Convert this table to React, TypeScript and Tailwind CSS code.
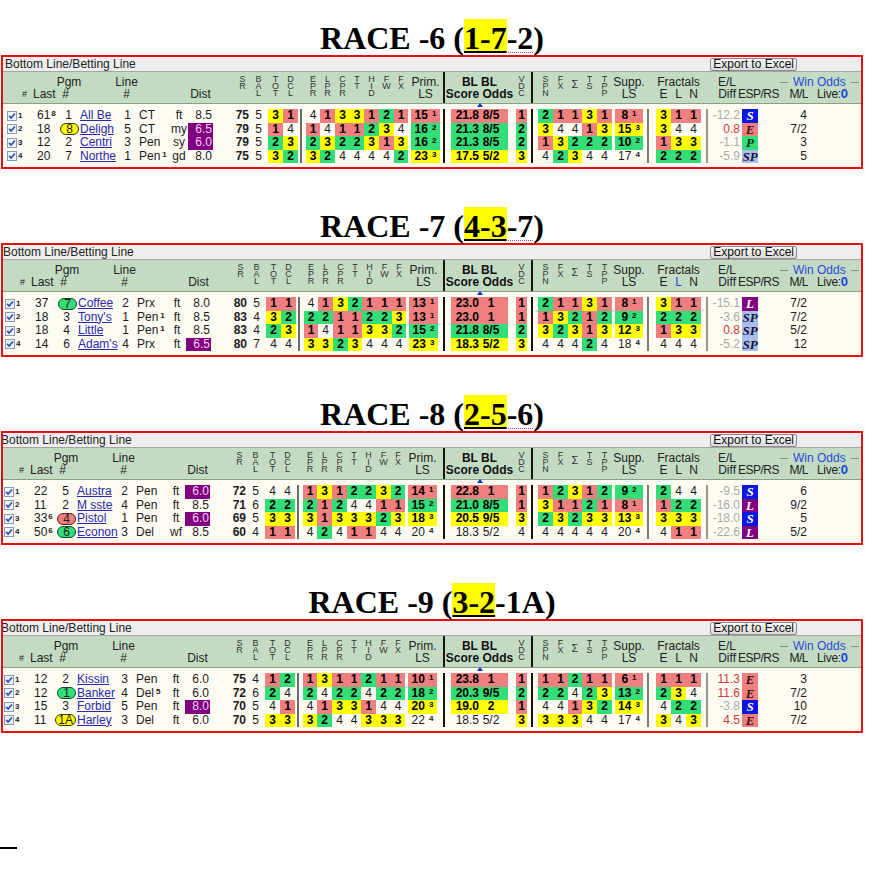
import React from "react";

type Horse = {
  last: string;
  lastSup?: string;
  pgm: string;
  oval?: "Y" | "G" | "R";
  name: string;
  line: string;
  track: string;
  trackSup?: string;
  surf: string;
  dist: string;
  purple?: boolean;
  sr: string;
  bal: string;
  td: string;
  fac: string;
  prim: [string, string, string];
  bl: [string, string, string];
  vdc: string;
  spn: string;
  supp: [string, string, string];
  fr: string;
  diff: string;
  badge: "S" | "E" | "P" | "SP" | "L";
  ml: string;
};

type Race = {
  n: number;
  hi: string;
  tail: string;
  dotted: boolean;
  s: 0 | 2 | 3;
  blueL?: boolean;
  horses: Horse[];
};

const RACES: Race[] = [
  {
    n: 6,
    hi: "1-7",
    tail: "-2",
    dotted: true,
    s: 0,
    horses: [
      { last: "61", lastSup: "8", pgm: "1", name: "All Be", line: "1", track: "CT", surf: "ft", dist: "8.5", sr: "75", bal: "5", td: "Y3 R1", fac: "W4 R1 Y3 Y3 R1 G2 R1", prim: ["R", "15", "1"], bl: ["R", "21.8", "8/5"], vdc: "R1", spn: "G2 R1 R1 Y3 R1", supp: ["R", "8", "1"], fr: "Y3 R1 R1", diff: "-12.2", badge: "S", ml: "4" },
      { last: "18", pgm: "8", oval: "Y", name: "Deligh", line: "5", track: "CT", surf: "my", dist: "6.5", purple: true, sr: "79", bal: "5", td: "R1 W4", fac: "R1 W4 R1 R1 G2 Y3 W4", prim: ["G", "16", "2"], bl: ["G", "21.3", "8/5"], vdc: "G2", spn: "Y3 W4 W4 R1 Y3", supp: ["Y", "15", "3"], fr: "Y3 W4 W4", diff: "0.8", badge: "E", ml: "7/2" },
      { last: "12", pgm: "2", name: "Centri", line: "3", track: "Pen", surf: "sy", dist: "6.0", purple: true, sr: "79", bal: "5", td: "G2 Y3", fac: "G2 Y3 G2 G2 Y3 R1 Y3", prim: ["G", "16", "2"], bl: ["G", "21.3", "8/5"], vdc: "G2", spn: "R1 Y3 G2 G2 G2", supp: ["G", "10", "2"], fr: "R1 Y3 Y3", diff: "-1.1", badge: "P", ml: "3" },
      { last: "20", pgm: "7", name: "Northe", line: "1", track: "Pen", trackSup: "1", surf: "gd", dist: "8.0", sr: "75", bal: "5", td: "Y3 G2", fac: "Y3 G2 W4 W4 W4 W4 G2", prim: ["Y", "23", "3"], bl: ["Y", "17.5", "5/2"], vdc: "Y3", spn: "W4 G2 Y3 W4 W4", supp: ["W", "17", "4"], fr: "G2 G2 G2", diff: "-5.9", badge: "SP", ml: "5" },
    ],
  },
  {
    n: 7,
    hi: "4-3",
    tail: "-7",
    dotted: true,
    s: 2,
    blueL: true,
    horses: [
      { last: "37", pgm: "7", oval: "G", name: "Coffee", line: "2", track: "Prx", surf: "ft", dist: "8.0", sr: "80", bal: "5", td: "R1 R1", fac: "W4 R1 Y3 G2 R1 R1 R1", prim: ["R", "13", "1"], bl: ["R", "23.0", "1"], vdc: "R1", spn: "G2 R1 R1 Y3 R1", supp: ["R", "8", "1"], fr: "Y3 R1 R1", diff: "-15.1", badge: "L", ml: "7/2" },
      { last: "18", pgm: "3", name: "Tony's", line: "1", track: "Pen", trackSup: "1", surf: "ft", dist: "8.5", sr: "83", bal: "4", td: "Y3 G2", fac: "G2 G2 R1 R1 G2 G2 Y3", prim: ["R", "13", "1"], bl: ["R", "23.0", "1"], vdc: "R1", spn: "R1 Y3 G2 R1 G2", supp: ["G", "9", "2"], fr: "G2 G2 G2", diff: "-3.6", badge: "SP", ml: "7/2" },
      { last: "18", pgm: "4", name: "Little", line: "1", track: "Pen", trackSup: "1", surf: "ft", dist: "8.5", sr: "83", bal: "4", td: "G2 Y3", fac: "R1 W4 R1 R1 Y3 Y3 G2", prim: ["G", "15", "2"], bl: ["G", "21.8", "8/5"], vdc: "G2", spn: "Y3 G2 Y3 R1 Y3", supp: ["Y", "12", "3"], fr: "R1 Y3 Y3", diff: "0.8", badge: "SP", ml: "5/2" },
      { last: "14", pgm: "6", name: "Adam's", line: "4", track: "Prx", surf: "ft", dist: "6.5", purple: true, sr: "80", bal: "7", td: "W4 W4", fac: "Y3 Y3 G2 Y3 W4 W4 W4", prim: ["Y", "23", "3"], bl: ["Y", "18.3", "5/2"], vdc: "Y3", spn: "W4 W4 W4 G2 W4", supp: ["W", "18", "4"], fr: "W4 W4 W4", diff: "-5.2", badge: "SP", ml: "12" },
    ],
  },
  {
    n: 8,
    hi: "2-5",
    tail: "-6",
    dotted: true,
    s: 3,
    horses: [
      { last: "22", pgm: "5", name: "Austra", line: "2", track: "Pen", surf: "ft", dist: "6.0", purple: true, sr: "72", bal: "5", td: "W4 W4", fac: "R1 Y3 R1 G2 G2 Y3 G2", prim: ["R", "14", "1"], bl: ["R", "22.8", "1"], vdc: "R1", spn: "R1 G2 Y3 R1 G2", supp: ["G", "9", "2"], fr: "G2 W4 W4", diff: "-9.5", badge: "S", ml: "6" },
      { last: "11", pgm: "2", name: "M sste", line: "4", track: "Pen", surf: "ft", dist: "8.5", sr: "71", bal: "6", td: "G2 G2", fac: "G2 R1 G2 W4 W4 R1 R1", prim: ["G", "15", "2"], bl: ["G", "21.0", "8/5"], vdc: "R1", spn: "Y3 R1 R1 G2 R1", supp: ["R", "8", "1"], fr: "R1 G2 G2", diff: "-16.0", badge: "L", ml: "9/2" },
      { last: "33", lastSup: "6", pgm: "4", oval: "R", name: "Pistol", line: "1", track: "Pen", surf: "ft", dist: "6.0", purple: true, sr: "69", bal: "5", td: "Y3 Y3", fac: "Y3 R1 Y3 Y3 Y3 G2 Y3", prim: ["Y", "18", "3"], bl: ["Y", "20.5", "9/5"], vdc: "Y3", spn: "G2 Y3 G2 Y3 Y3", supp: ["Y", "13", "3"], fr: "Y3 Y3 Y3", diff: "-18.0", badge: "S", ml: "5" },
      { last: "50", lastSup: "6", pgm: "6", oval: "G", name: "Econon", line: "3", track: "Del", surf: "wf", dist: "8.5", sr: "60", bal: "4", td: "R1 R1", fac: "W4 G2 W4 R1 R1 W4 W4", prim: ["W", "20", "4"], bl: ["W", "18.3", "5/2"], vdc: "W4", spn: "W4 W4 W4 W4 W4", supp: ["W", "20", "4"], fr: "W4 R1 R1", diff: "-22.6", badge: "L", ml: "5/2" },
    ],
  },
  {
    n: 9,
    hi: "3-2",
    tail: "-1A",
    dotted: false,
    s: 3,
    horses: [
      { last: "12", pgm: "2", name: "Kissin", line: "3", track: "Pen", surf: "ft", dist: "6.0", sr: "75", bal: "4", td: "R1 G2", fac: "R1 Y3 R1 R1 G2 R1 R1", prim: ["R", "10", "1"], bl: ["R", "23.8", "1"], vdc: "R1", spn: "R1 R1 G2 R1 R1", supp: ["R", "6", "1"], fr: "R1 R1 R1", diff: "11.3", badge: "E", ml: "3" },
      { last: "12", pgm: "1", oval: "G", name: "Banker", line: "4", track: "Del", trackSup: "5", surf: "ft", dist: "6.0", sr: "72", bal: "6", td: "G2 W4", fac: "G2 W4 G2 G2 W4 G2 G2", prim: ["G", "18", "2"], bl: ["G", "20.3", "9/5"], vdc: "G2", spn: "G2 G2 W4 G2 Y3", supp: ["G", "13", "2"], fr: "G2 Y3 W4", diff: "11.6", badge: "E", ml: "7/2" },
      { last: "15", pgm: "3", name: "Forbid", line: "5", track: "Pen", surf: "ft", dist: "8.0", purple: true, sr: "70", bal: "5", td: "W4 R1", fac: "W4 R1 Y3 Y3 R1 W4 W4", prim: ["Y", "20", "3"], bl: ["Y", "19.0", "2"], vdc: "R1", spn: "W4 W4 R1 Y3 G2", supp: ["Y", "14", "3"], fr: "W4 G2 G2", diff: "-3.8", badge: "S", ml: "10" },
      { last: "11", pgm: "1A", oval: "Y", name: "Harley", line: "3", track: "Del", surf: "ft", dist: "6.0", sr: "70", bal: "5", td: "Y3 Y3", fac: "Y3 G2 W4 W4 Y3 Y3 Y3", prim: ["W", "22", "4"], bl: ["W", "18.5", "5/2"], vdc: "Y3", spn: "Y3 Y3 Y3 W4 W4", supp: ["W", "17", "4"], fr: "Y3 W4 Y3", diff: "4.5", badge: "E", ml: "7/2" },
    ],
  },
];

const BG: Record<string, string> = {
  R: "bg-[#f08080]",
  G: "bg-[#33dd77]",
  Y: "bg-[#ffff00]",
  W: "",
};

const OVAL: Record<string, string> = {
  Y: "bg-[#ffff00] border-[#3a3a00]",
  G: "bg-[#33dd77] border-[#0e4a24]",
  R: "bg-[#f08080] border-[#5a1a1a]",
};

const BADGE: Record<string, string> = {
  S: "bg-[#0c16e4] text-white",
  E: "bg-[#f08080] text-[#3a1010]",
  P: "bg-[#33dd77] text-[#0a3018]",
  SP: "bg-[#a9bde8] text-[#14143c]",
  L: "bg-[#800080] text-white",
};

// shift of the left block (px) per race
const PAD: Record<number, string> = { 0: "w-[4px]", 2: "w-[2px]", 3: "w-[1px]" };
const SEPBL: Record<number, string> = { 0: "w-[11px]", 2: "w-[13px]", 3: "w-[14px]" };
const TITLE_ML: Record<number, string> = { 0: "ml-[2px]", 2: "ml-0", 3: "-ml-[2px]" };

const FAC_W = ["w-[14px]", "w-[15px]", "w-[15px]", "w-[14px]", "w-[15px]", "w-[15px]", "w-[14px]"];
const SPN_W = ["w-[15px]", "w-[15px]", "w-[14px]", "w-[15px]", "w-[15px]"];
const TD_W = ["w-[15px]", "w-[15px]"];
const FR_W = ["w-[15px]", "w-[15px]", "w-[15px]"];

function parse(s: string) {
  return s.split(" ").map((t) => ({ c: t[0], v: t.slice(1) }));
}

function Cell({ c, w, children }: { c: string; w: string; children: React.ReactNode }) {
  return (
    <div className={`${w} flex shrink-0 items-center justify-center whitespace-nowrap ${BG[c]} ${c === "W" ? "" : "font-bold text-black"}`}>
      {children}
    </div>
  );
}

function Group({ data, widths }: { data: string; widths: string[] }) {
  return (
    <>
      {parse(data).map((d, i) => (
        <Cell key={i} c={d.c} w={widths[i]}>
          {d.v}
        </Cell>
      ))}
    </>
  );
}

function Sup({ children, gap = "ml-[1px]" }: { children: React.ReactNode; gap?: string }) {
  return <span className={`relative top-[-3px] ${gap} text-[8px] font-bold leading-none`}>{children}</span>;
}

function LsCell({ v, w }: { v: [string, string, string]; w: string }) {
  const [c, n, sup] = v;
  return (
    <Cell c={c} w={w}>
      <span>
        {n}
        <Sup gap="ml-[4px]">{sup}</Sup>
      </span>
    </Cell>
  );
}

function Check() {
  return (
    <svg width="10" height="10" viewBox="0 0 10 10" className="shrink-0">
      <rect x="0.5" y="0.5" width="9" height="9" fill="#f3f4f8" stroke="#7f9db9" />
      <path d="M2.1 4.9 L4.1 7 L7.9 2.5" fill="none" stroke="#2a4fc0" strokeWidth="1.7" />
    </svg>
  );
}

function Line({ ml, color }: { ml: string; color: string }) {
  return <div className={`${ml} h-full w-[2px] ${color}`} />;
}

function HorseRow({ h, n, s }: { h: Horse; n: number; s: number }) {
  const neg = h.diff.startsWith("-");
  return (
    <div className="flex h-[13.5px] text-[12px] leading-[13.5px] text-[#1c1c1c]">
      <div className={`${PAD[s]} shrink-0`} />
      <div className="flex w-[16px] shrink-0 items-center">
        <Check />
        <span className="ml-[1px] text-[8px] font-bold leading-none">{n}</span>
      </div>
      <div className="w-[35px] shrink-0 whitespace-nowrap pl-[14px]">
        {h.last}
        {h.lastSup && <Sup>{h.lastSup}</Sup>}
      </div>
      <div className="flex w-[22px] shrink-0 items-center justify-end">
        {h.oval ? (
          <span className={`mr-[1px] flex h-[12px] items-center rounded-full border leading-none ${h.pgm.length > 1 ? "px-[2px]" : "px-[5px]"} ${OVAL[h.oval]}`}>
            {h.pgm}
          </span>
        ) : (
          <span className="pr-[8px]">{h.pgm}</span>
        )}
      </div>
      <div className="w-[36px] shrink-0 whitespace-nowrap text-[#2828b0] underline">{h.name}</div>
      <div className="w-[21px] shrink-0 pr-[6px] text-right">{h.line}</div>
      <div className="w-[33px] shrink-0 whitespace-nowrap pl-[2px]">
        {h.track}
        {h.trackSup && <Sup gap="ml-[2px]">{h.trackSup}</Sup>}
      </div>
      <div className="w-[18px] shrink-0 text-center">{h.surf}</div>
      <div className={`w-[25px] shrink-0 pr-[1px] text-right ${h.purple ? "bg-[#800080] text-[#f6d2f6]" : ""}`}>{h.dist}</div>
      <div className="w-[21px] shrink-0" />
      <div className="w-[17px] shrink-0 pr-[2px] text-right font-bold">{h.sr}</div>
      <div className="w-[15px] shrink-0 text-center">{h.bal}</div>
      <div className="w-[2px] shrink-0" />
      <Group data={h.td} widths={TD_W} />
      <div className="flex w-[8px] shrink-0">
        <Line ml="ml-[2px]" color="bg-[#6a6a6a]" />
      </div>
      <Group data={h.fac} widths={FAC_W} />
      <div className="w-[3px] shrink-0" />
      <LsCell v={h.prim} w="w-[29px]" />
      <div className={`${SEPBL[s]} flex shrink-0 justify-end`}>
        <div className="mr-[6px] h-full w-[2px] bg-[#151515]" />
      </div>
      <div className={`flex w-[57px] shrink-0 ${BG[h.bl[0]]} ${h.bl[0] === "W" ? "" : "font-bold text-black"}`}>
        <span className="w-[28px] text-right">{h.bl[1]}</span>
        <span className="w-[24px] text-center">{h.bl[2]}</span>
      </div>
      <div className="w-[8px] shrink-0" />
      <Group data={h.vdc} widths={["w-[11px]"]} />
      <div className="flex w-[11px] shrink-0">
        <Line ml="ml-[4px]" color="bg-[#151515]" />
      </div>
      <Group data={h.spn} widths={SPN_W} />
      <div className="w-[3px] shrink-0" />
      <LsCell v={h.supp} w="w-[28px]" />
      <div className="flex w-[13px] shrink-0">
        <Line ml="ml-[4px]" color="bg-[#7a7a7a]" />
      </div>
      <Group data={h.fr} widths={FR_W} />
      <div className="flex w-[11px] shrink-0">
        <Line ml="ml-[5px]" color="bg-[#959595]" />
      </div>
      <div className={`w-[29px] shrink-0 pr-[1px] text-right ${neg ? "text-[#aaaaaa]" : "text-[#d23a3a]"}`}>{h.diff}</div>
      <div className="w-[1px] shrink-0" />
      <div className={`flex w-[16px] shrink-0 items-center justify-center font-['Liberation_Serif',serif] text-[13px] font-bold italic ${BADGE[h.badge]}`}>
        {h.badge}
      </div>
      <div className="w-[50px] shrink-0 pr-[1px] text-right">{h.ml}</div>
      <div className="flex-1" />
    </div>
  );
}

function Stack({ t, w }: { t: string; w: string }) {
  return (
    <div className={`${w} flex shrink-0 flex-col items-center pt-[4px] text-[9px] leading-[7px] text-[#333]`}>
      {t.split("").map((ch, i) => (
        <span key={i}>{ch}</span>
      ))}
    </div>
  );
}

function TwoLine({ a, b, w, bold }: { a: string; b: string; w: string; bold?: boolean }) {
  return (
    <div className={`${w} flex shrink-0 flex-col items-center whitespace-nowrap pt-[4px] ${bold ? "font-bold text-[#111]" : ""}`}>
      <span>{a || "\u00a0"}</span>
      <span>{b}</span>
    </div>
  );
}

function HeaderRow({ s, blueL }: { s: number; blueL?: boolean }) {
  return (
    <div className="flex h-[32px] border-b border-[#8d9e8d] bg-[#c3dbc3] text-[12px] leading-[12px] text-[#222]">
      <div className={`${PAD[s]} shrink-0`} />
      <div className="w-[16px] shrink-0 pl-[15px] pt-[18px] text-[9px] leading-none">#</div>
      <div className="w-[35px] shrink-0 pl-[10px] pt-[16px]">Last</div>
      <div className="flex w-[22px] shrink-0 flex-col items-center whitespace-nowrap pt-[4px]">
        <span>Pgm</span>
        <span className="mr-[7px]">#</span>
      </div>
      <div className="w-[36px] shrink-0" />
      <TwoLine a="Line" b="#" w="w-[21px]" />
      <div className="w-[33px] shrink-0" />
      <div className="w-[18px] shrink-0" />
      <TwoLine a="" b="Dist" w="w-[25px]" />
      <div className="w-[21px] shrink-0" />
      <Stack t="SR" w="w-[17px]" />
      <Stack t="BAL" w="w-[15px]" />
      <div className="w-[2px] shrink-0" />
      <Stack t="TOT" w="w-[15px]" />
      <Stack t="DCL" w="w-[15px]" />
      <div className="w-[8px] shrink-0" />
      {["EPR", "LPR", "CPR", "TT", "HID", "FW", "FX"].map((t, i) => (
        <Stack key={t} t={t} w={FAC_W[i]} />
      ))}
      <div className="w-[3px] shrink-0" />
      <TwoLine a="Prim." b="LS" w="w-[29px]" />
      <div className={`${SEPBL[s]} flex shrink-0 justify-end`}>
        <div className="mr-[6px] h-full w-[2px] bg-[#151515]" />
      </div>
      <div className="relative w-[57px] shrink-0">
        <TwoLine a="BL BL" b="Score Odds" w="w-[57px]" bold />
        <div className="absolute bottom-[-4px] left-[26px] h-0 w-0 border-x-[3px] border-b-[4px] border-x-transparent border-b-[#1030d0]" />
      </div>
      <div className="w-[8px] shrink-0" />
      <Stack t="VDC" w="w-[11px]" />
      <div className="flex w-[11px] shrink-0">
        <Line ml="ml-[4px]" color="bg-[#151515]" />
      </div>
      <Stack t="SPN" w={SPN_W[0]} />
      <Stack t="FX" w={SPN_W[1]} />
      <div className={`${SPN_W[2]} flex shrink-0 justify-center pt-[7px] text-[11px] leading-none text-[#333]`}>Σ</div>
      <Stack t="TS" w={SPN_W[3]} />
      <Stack t="TPP" w={SPN_W[4]} />
      <div className="w-[3px] shrink-0" />
      <TwoLine a="Supp." b="LS" w="w-[28px]" />
      <div className="w-[13px] shrink-0" />
      <div className="flex w-[45px] shrink-0 flex-col pt-[4px]">
        <span className="text-center">Fractals</span>
        <div className="flex">
          <span className="w-[15px] text-center">E</span>
          <span className={`w-[15px] text-center ${blueL ? "text-[#2c4ad8]" : ""}`}>L</span>
          <span className="w-[15px] text-center">N</span>
        </div>
      </div>
      <div className="w-[11px] shrink-0" />
      <div className="flex flex-1 flex-col pt-[4px] whitespace-nowrap">
        <div className="flex h-[12px] items-center">
          <span className="w-[68px] pl-[6px]">E/L</span>
          <span className="h-[1px] w-[8px] bg-[#8a8a8a]" />
          <span className="px-[5px] text-[#2c4ad8]">Win Odds</span>
          <span className="h-[1px] w-[8px] bg-[#8a8a8a]" />
        </div>
        <div className="flex h-[12px] items-center">
          <span className="w-[24px] text-right">Diff</span>
          <span className="ml-[2px] w-[41px] tracking-[-0.5px]">ESP/RS</span>
          <span className="w-[29px] text-right tracking-[-0.5px]">M/L</span>
          <span className="pl-[9px] tracking-[-0.3px]">Live:</span>
          <span className="text-[13px] font-bold text-[#2040e0]">0</span>
        </div>
      </div>
    </div>
  );
}

function RaceBlock({ race, last }: { race: Race; last: boolean }) {
  return (
    <section className={last ? "" : "mb-[38px]"}>
      <h2 className="ml-[1px] h-[36px] w-[862px] text-center font-['Liberation_Serif','Times_New_Roman',serif] text-[32px] font-bold leading-[36px] text-black">
        RACE -{race.n} (
        <span className="inline-block h-[32px] bg-[#ffff00] leading-[38px] underline decoration-[2px] underline-offset-[2px]">{race.hi}</span>
        <span className={race.dotted ? "underline decoration-[#a040b0] decoration-dotted decoration-[1px] underline-offset-[3px]" : ""}>{race.tail}</span>)
      </h2>
      <div className="ml-[1px] w-[862px] overflow-hidden border-2 border-[#e81010] bg-[#fdfbf2] font-['Liberation_Sans',Arial,sans-serif]">
        <div className="flex h-[15px] items-center overflow-hidden border-b border-[#a4a4a4] bg-[#eeeeee] text-[12px] leading-none text-[#222]">
          <span className={TITLE_ML[race.s]}>Bottom Line/Betting Line</span>
          <span className="ml-auto mr-[64px] flex h-[13px] items-center rounded-[2px] border border-[#8c8c8c] bg-gradient-to-b from-[#fafafa] to-[#dadada] px-[2px] text-[12px] leading-none text-[#111]">
            Export to Excel
          </span>
        </div>
        <HeaderRow s={race.s} blueL={race.blueL} />
        <div className="h-[63px] pt-[5px]">
          {race.horses.map((h, i) => (
            <HorseRow key={i} h={h} n={i + 1} s={race.s} />
          ))}
        </div>
      </div>
    </section>
  );
}

export default function App() {
  return (
    <div className="h-[869px] w-[875px] overflow-hidden bg-white pt-[19px]">
      {RACES.map((r, i) => (
        <RaceBlock key={r.n} race={r} last={i === RACES.length - 1} />
      ))}
      <div className="mt-[114px] h-[2px] w-[17px] bg-black" />
    </div>
  );
}
